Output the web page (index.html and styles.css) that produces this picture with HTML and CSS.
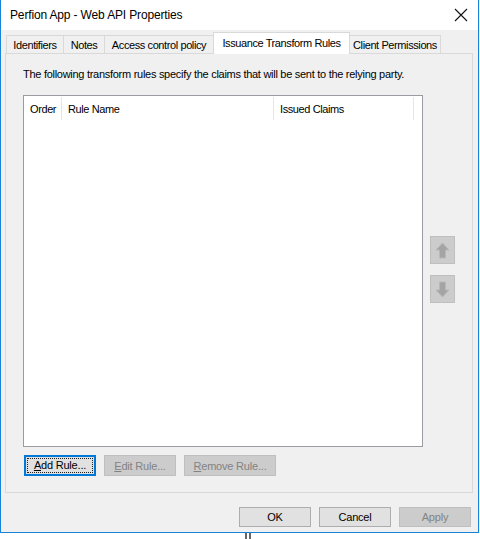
FILE: index.html
```
<!DOCTYPE html>
<html lang="en">
<head>
    <meta charset="UTF-8">
    <title>Perfion App - Web API Properties</title>
    <link rel="stylesheet" href="styles.css">
</head>
<body>
    <div class="window">
        <div class="titlebar">
            <span class="title">Perfion App - Web API Properties</span>
            <svg class="close" width="14" height="14" viewBox="0 0 14 14">
                <path d="M1 1 L13 13 M13 1 L1 13" stroke="#111" stroke-width="1.1" fill="none"/>
            </svg>
        </div>
        <div class="client">
            <div class="tabs">
                <div class="tab tab-ident">Identifiers</div>
                <div class="tab tab-notes">Notes</div>
                <div class="tab tab-access">Access control policy</div>
                <div class="tab tab-issuance selected">Issuance Transform Rules</div>
                <div class="tab tab-client">Client Permissions</div>
            </div>
            <div class="panel">
                <p class="desc">The following transform rules specify the claims that will be sent to the relying party.</p>
                <div class="list-row">
                    <div class="listview">
                        <div class="lv-header">
                            <div class="col col-order">Order</div>
                            <div class="col col-name">Rule Name</div>
                            <div class="col col-claims">Issued Claims</div>
                        </div>
                    </div>
                    <div class="move-btns">
                        <div class="move-btn">
                            <svg width="15" height="17" viewBox="0 0 15 17">
                                <path d="M7.5 1 L14 8 H10.5 V16 H4.5 V8 H1 Z" fill="#a4a4a4" stroke="#b8b8b8" stroke-width="1"/>
                            </svg>
                        </div>
                        <div class="move-btn">
                            <svg width="15" height="17" viewBox="0 0 15 17">
                                <path d="M7.5 16 L14 9 H10.5 V1 H4.5 V9 H1 Z" fill="#a4a4a4" stroke="#b8b8b8" stroke-width="1"/>
                            </svg>
                        </div>
                    </div>
                </div>
                <div class="rule-btns">
                    <button class="btn focused"><span class="focus-rect"><u>A</u>dd Rule...</span></button>
                    <button class="btn disabled"><u>E</u>dit Rule...</button>
                    <button class="btn disabled wide"><u>R</u>emove Rule...</button>
                </div>
            </div>
            <div class="footer">
                <button class="btn dlg">OK</button>
                <button class="btn dlg">Cancel</button>
                <button class="btn dlg disabled">Apply</button>
            </div>
        </div>
    </div>
    <div class="stray"></div>
</body>
</html>
```

FILE: styles.css
```
body {
    margin: 0;
    background: #fff;
    font-family: "Liberation Sans", Arial, sans-serif;
    font-size: 11px;
    letter-spacing: -0.4px;
    color: #000;
}
.window {
    width: 479px;
    height: 533px;
    box-sizing: border-box;
    border-left: 1px solid #1883d7;
    border-right: 1px solid #1883d7;
    border-bottom: 1px solid #1883d7;
    display: flex;
    flex-direction: column;
}
.titlebar {
    height: 30px;
    background: #fff;
    display: flex;
    align-items: center;
    justify-content: space-between;
    padding: 0 10px 0 9px;
}
.title {
    font-size: 12px;
    letter-spacing: -0.15px;
}
.client {
    flex: 1;
    background: #f0f0f0;
    padding: 3px 5px 0 4px;
}
.tabs {
    display: flex;
    align-items: flex-end;
    height: 20px;
    position: relative;
    z-index: 1;
    padding-left: 1px;
}
.tab {
    height: 18px;
    box-sizing: border-box;
    border: 1px solid #d9d9d9;
    border-bottom: none;
    margin-left: -1px;
    background: #f0f0f0;
    display: flex;
    align-items: center;
    justify-content: center;
    padding-top: 1px;
    white-space: nowrap;
}
.tab-ident { width: 58px; margin-left: 0; }
.tab-notes { width: 42px; }
.tab-access { width: 110px; }
.tab-issuance { width: 137px; }
.tab-client { width: 92px; }
.tab.selected {
    height: 22px;
    background: #fff;
    margin-bottom: -1px;
    padding-top: 0;
    padding-bottom: 2px;
}
.panel {
    width: 468px;
    height: 440px;
    box-sizing: border-box;
    border: 1px solid #d9d9d9;
    padding: 14px 0 0 17px;
    display: flex;
    flex-direction: column;
}
.desc {
    margin: 0;
    line-height: 13px;
    letter-spacing: -0.28px;
}
.list-row {
    display: flex;
    margin-top: 14px;
}
.listview {
    width: 400px;
    height: 352px;
    box-sizing: border-box;
    border: 1px solid #9a9ca2;
    background: #fff;
}
.lv-header {
    display: flex;
    height: 24px;
    align-items: stretch;
}
.col {
    display: flex;
    align-items: center;
    padding-left: 6px;
    border-right: 1px solid #e5e5e5;
    margin: 1px 0 0;
}
.col-order { width: 31px; padding-left: 6px; }
.col-name { width: 205px; }
.col-claims { width: 133px; }
.move-btns {
    display: flex;
    flex-direction: column;
    gap: 11px;
    margin: 141px 0 0 7px;
}
.move-btn {
    width: 25px;
    height: 28px;
    box-sizing: border-box;
    background: #cccccc;
    border: 1px solid #bfbfbf;
    display: flex;
    align-items: center;
    justify-content: center;
}
.rule-btns {
    display: flex;
    gap: 8px;
    margin-top: 8px;
    padding-left: 1px;
}
.btn {
    width: 72px;
    height: 21px;
    box-sizing: border-box;
    border: 1px solid #adadad;
    background: #e1e1e1;
    font-family: "Liberation Sans", Arial, sans-serif;
    font-size: 11px;
    letter-spacing: -0.2px;
    color: #000;
    padding: 0;
    display: flex;
    align-items: center;
    justify-content: center;
}
.btn.wide { width: 92px; }
.btn.disabled {
    background: #cccccc;
    border-color: #bfbfbf;
    color: #838383;
}
.btn.focused {
    border-color: #0078d7;
    box-shadow: inset 0 0 0 1px #0078d7;
}
.focus-rect {
    display: block;
    width: 64px;
    height: 13px;
    line-height: 13px;
    outline: 1px dotted #222;
}
.footer {
    display: flex;
    justify-content: flex-end;
    gap: 8px;
    margin-top: 14px;
    padding-right: 2px;
}
.btn.dlg { height: 20px; }
.stray {
    margin-left: 245px;
    width: 2px;
    height: 6px;
    border-left: 2px solid #666;
    border-right: 2px solid #666;
}
```
